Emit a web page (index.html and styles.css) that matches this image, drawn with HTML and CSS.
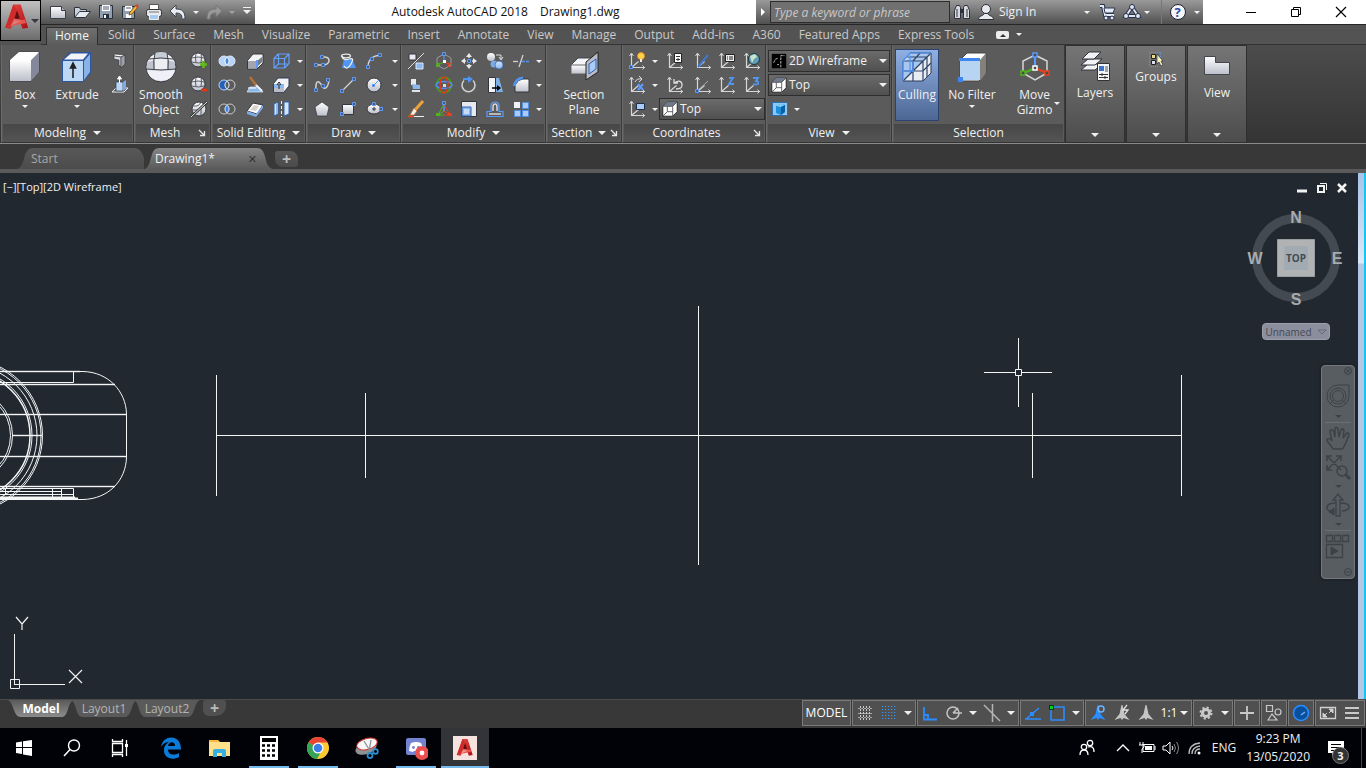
FILE: index.html
```html
<!DOCTYPE html>
<html lang="en">
<head>
<meta charset="utf-8">
<title>Autodesk AutoCAD 2018 - Drawing1.dwg</title>
<link rel="stylesheet" href="styles.css">
</head>
<body>
<svg class="sprite" aria-hidden="true">
<defs>
<linearGradient id="gw" x1="0" y1="0" x2="0" y2="1"><stop offset="0" stop-color="#fff"/><stop offset="1" stop-color="#bcbfca"/></linearGradient>
<linearGradient id="gb" x1="0" y1="0" x2="0" y2="1"><stop offset="0" stop-color="#d3e5fa"/><stop offset="1" stop-color="#8db8ee"/></linearGradient>
<linearGradient id="gr" x1="0" y1="0" x2="1" y2="1"><stop offset="0" stop-color="#f0504a"/><stop offset="1" stop-color="#a80f14"/></linearGradient>
<linearGradient id="gt" x1="0" y1="0" x2="0" y2="1"><stop offset="0" stop-color="#585858"/><stop offset="1" stop-color="#4c4c4c"/></linearGradient>
<linearGradient id="gta" x1="0" y1="0" x2="0" y2="1"><stop offset="0" stop-color="#858585"/><stop offset="1" stop-color="#5a5a5a"/></linearGradient>
<linearGradient id="gma" x1="0" y1="0" x2="0" y2="1"><stop offset="0" stop-color="#5a5a5a"/><stop offset="1" stop-color="#8c8c8c"/></linearGradient>
<symbol id="i-acad" viewBox="0 0 28 30"><path d="M10 1h8l8 25-6 1-3-8-6 0-4 8-6-1z" fill="url(#gr)"/><path d="M14 7l3 9-6 1z" fill="#5e1010"/><path d="M2 26l20-9 2 4-15 3z" fill="#e8544e"/><path d="M10 1l4 6-5 14-7 5z" fill="#cf2b2b"/><path d="M11 16l-4 8 13-6z" fill="#f08078" opacity=".7"/></symbol>
<symbol id="i-new" viewBox="0 0 20 20"><path d="M2.500 4.500h11l4 4v8h-15z" fill="url(#gw)" stroke="#3a3d44"/><path d="M13.500 4.500v4h4" fill="#aab" stroke="#3a3d44"/></symbol>
<symbol id="i-open" viewBox="0 0 20 20"><path d="M2.500 15.500v-10h5l1 2h6v3" fill="#c9d0da" stroke="#2c3440"/><path d="M2.500 15.500l5-6h11l-5 6z" fill="#e6eaf0" stroke="#2c3440"/></symbol>
<symbol id="i-save" viewBox="0 0 20 20"><path d="M3.500 3.500h13v13h-12l-1-1z" fill="#93a0b3" stroke="#28303c"/><path d="M6 3h8v6H6z" fill="#fff"/><path d="M7 5h6M7 7h6" stroke="#556"/><path d="M7 12h6v4H7z" fill="#28303c"/><path d="M8 13h2v3H8z" fill="#fff"/></symbol>
<symbol id="i-saveas" viewBox="0 0 20 20"><path d="M2.500 4.500h12v12h-11l-1-1z" fill="#93a0b3" stroke="#28303c"/><path d="M5 4h7v5H5z" fill="#fff"/><path d="M6 6h5" stroke="#556"/><path d="M6 12h5v4H6z" fill="#fff"/><path d="M16 3l2 2-6 7-3 1 1-3z" fill="#f6b73c" stroke="#5a3a10" stroke-width=".7"/><path d="M15 4l2-2 2 2-2 2z" fill="#d24a32"/></symbol>
<symbol id="i-print" viewBox="0 0 20 20"><path d="M5.500 2.500h9v5h-9z" fill="#fff" stroke="#555"/><rect x="2.500" y="7.500" width="15" height="7" rx="2" fill="#e8e8ec" stroke="#333"/><path d="M5.500 12.500h9v5h-9z" fill="#a8cbf2" stroke="#eee"/><path d="M5 10h10" stroke="#777"/></symbol>
<symbol id="i-undo" viewBox="0 0 20 20"><path d="M2 9l6-6v4c6 0 9 2 9 10h-3c0-5-2-6-6-6v4z" fill="#e9edf2" stroke="#3d4653"/></symbol>
<symbol id="i-redo" viewBox="0 0 20 20"><path d="M18 9l-6-6v4c-6 0-9 2-9 10h3c0-5 2-6 6-6v4z" fill="#999" stroke="#777"/></symbol>
<symbol id="i-bino" viewBox="0 0 20 20"><path d="M2.500 8.500l2-5h3l1 2v11h-6zM11.500 5.500l1-2h3l2 5v8h-6z" fill="#d8dce2" stroke="#2c3038"/><path d="M8 7h4v4H8z" fill="#2c3038"/><path d="M5 7v8M15 7v8" stroke="#2c3038"/></symbol>
<symbol id="i-user" viewBox="0 0 20 20"><circle cx="10" cy="7" r="4.500" fill="#e8eaf0" stroke="#2a2e36"/><path d="M2.500 17.500c0-4 4-3 6-6h3c2 3 6 2 6 6z" fill="#e8eaf0" stroke="#2a2e36"/></symbol>
<symbol id="i-cart" viewBox="0 0 20 20"><path d="M2 4h3l2 9h9" fill="none" stroke="#26304a" stroke-width="4"/><path d="M2 4h3l2 9h9" fill="none" stroke="#e6ecf6" stroke-width="2"/><path d="M6 6h11l-2 5H7z" fill="#e6ecf6" stroke="#2b3750"/><circle cx="8" cy="16" r="2" fill="#e6ecf6" stroke="#26304a"/><circle cx="14" cy="16" r="2" fill="#e6ecf6" stroke="#26304a"/></symbol>
<symbol id="i-tri" viewBox="0 0 20 20"><path d="M10 5L4 14h12z" fill="none" stroke="#26304a" stroke-width="4"/><path d="M10 5L4 14h12z" fill="none" stroke="#dfe6f2" stroke-width="2"/><circle cx="10" cy="5" r="2.500" fill="#dfe6f2" stroke="#26304a"/><circle cx="4" cy="14" r="2.500" fill="#dfe6f2" stroke="#26304a"/><circle cx="16" cy="14" r="2.500" fill="#dfe6f2" stroke="#26304a"/></symbol>
<symbol id="i-box" viewBox="0 0 34 34"><path d="M2 10L11 2h20v20l-8 9H2z" fill="#eceef2" stroke="#3c3e44"/><path d="M23 10l8-8v20l-8 9z" fill="#84889a"/><path d="M2 10h21v21H2z" fill="url(#gw)"/><path d="M2 10L11 2h20l-8 8z" fill="#fff"/></symbol>
<symbol id="i-extrude" viewBox="0 0 34 34"><path d="M2 10L10 2h21v21l-8 9H2z" fill="#2c56a0"/><path d="M3 11h20v20H3z" fill="#bcd8f6"/><path d="M24 11l6-7v18l-6 8z" fill="#8ab2e6"/><path d="M4 9.500L11 3.500h17l-5 6z" fill="#f2f4f8"/><path d="M13 28V15M10.500 18l2.500-5 2.500 5z" stroke="#222" stroke-width="1.600" fill="#222"/></symbol>
<symbol id="i-sphere" viewBox="0 0 34 34"><circle cx="17" cy="17" r="15" fill="url(#gw)" stroke="#393b42"/><path d="M3 12q14-4 28 0v7H2.500z" fill="#bfc3ce"/><path d="M11 3q6-2 12 0l1 6q-7-1-14 0z" fill="#c8ccd6"/><path d="M5 9q12-2 24 0M2 19q15 2 30 0M11 3q-2 8-1 16M23 3q2 8 1 16" fill="none" stroke="#3f424a"/><path d="M11 10h12v9H11z" fill="#eceef2"/><path d="M3 20q14 2 28 0-3 11-14 11T3 20z" fill="#f0f1f8"/></symbol>
<symbol id="i-secpl" viewBox="0 0 34 34"><path d="M4 15l7-7h13v16H4z" fill="#f4f5f8" stroke="#44464c"/><path d="M4 15h17v9H4z" fill="url(#gw)" stroke="#666"/><path d="M19 12L31 2v20L19 30z" fill="#b9bdc8" stroke="#222"/><path d="M22 14l7-5v10l-7 5z" fill="#a9cbf6" stroke="#2e62b4"/></symbol>
<symbol id="i-cull" viewBox="0 0 34 34"><path d="M3 11L10 3h21v20l-8 8H3z" fill="#e9ecf2" stroke="#2c3b58"/><path d="M4 12L12 4h19L3 31z" fill="#a9c6ee"/><g fill="none" stroke="#2f4468" stroke-width="1.200"><path d="M3 11h20v20M23 11l8-8M13 11v20M3 21h20l8-8M7 7h20v20M13 11l7-8M3 31L31 3"/></g><path d="M3 31V11l7-8h21M3 21h11M13 11v11M10 3v20" stroke="#4e96ff" fill="none" stroke-width="1.200"/></symbol>
<symbol id="i-nofil" viewBox="0 0 34 34"><path d="M5 10l7-7h19v20l-7 8H5z" fill="#fff" stroke="#444"/><path d="M25 10l6-7v20l-6 8z" fill="#85807c"/><path d="M5 10h20v20H5z" fill="#b7d4f2"/><path d="M4 8h21v3H4z" fill="#3f86ee"/><path d="M3 27h5v5H3z" fill="#3f86ee"/></symbol>
<symbol id="i-gizmo" viewBox="0 0 34 34"><path d="M17 5l12 6v12l-12 7-12-7V11z" fill="none" stroke="#d6d6d6" stroke-width="1.500"/><path d="M17 6v11" stroke="#5b9bff" stroke-width="2"/><path d="M17 18L6 23" stroke="#4fb51b" stroke-width="2"/><path d="M17 18l12 5" stroke="#e8401c" stroke-width="2"/><g fill="#4a4a4a" stroke-width="1.500"><path d="M15 3h4v4h-4z" stroke="#5b9bff"/><path d="M3 21h4v4H3z" stroke="#4fb51b"/><path d="M27 21h4v4h-4z" stroke="#e8401c"/><path d="M15 16h4v4h-4z" stroke="#fff"/></g></symbol>
<symbol id="i-layers" viewBox="0 0 34 34"><g fill="#f1f2f5" stroke="#303238"><path d="M3 21l7-6h14l-7 6z"/><path d="M3 16l7-6h14l-7 6z"/><path d="M4 10l7-7h12l-7 7z"/></g><path d="M19.500 14.500h12v17h-12z" fill="#f4f4f6" stroke="#303238"/><path d="M21 17h5v5h-5z" fill="#3d74c8"/><path d="M27 17h3v6h-3z" fill="#9aa"/><path d="M21 25.500h9M21 28.500h9M24 24v3M27 27v3" stroke="#333"/></symbol>
<symbol id="i-groups" viewBox="0 0 20 20"><path d="M3 3.500h11M3.500 3v14M3 17.500h9M14.500 3v8" stroke="#4f9af8" stroke-dasharray="1 1" fill="none"/><path d="M5.500 5.500h4v4h-4z" fill="#e8dc90" stroke="#222"/><path d="M5.500 11.500h4v4h-4z" fill="#dde" stroke="#222"/><path d="M11 5l6 7h-2l2 4-2 1-2-4-2 2z" fill="#f7f5c4" stroke="#333" stroke-width=".7"/></symbol>
<symbol id="i-vw" viewBox="0 0 34 34"><path d="M4.500 7.500h11v6h14v12h-25z" fill="url(#gw)" stroke="#44464c"/></symbol>
<symbol id="i-polysolid" viewBox="0 0 20 20"><path d="M4 3l11 1-4 2-7-1z" fill="#fff" stroke="#333" stroke-width=".6"/><path d="M4 5l7 1v10l-2-2V9L4 8z" fill="#d5d9e2" stroke="#333" stroke-width=".6"/><path d="M11 6l4-2v9l-4 4z" fill="#9da1ad" stroke="#333" stroke-width=".6"/></symbol>
<symbol id="i-presspull" viewBox="0 0 20 20"><path d="M2 17l4-4h12l-4 4z" fill="none" stroke="#eee"/><path d="M6 7h7v9H6z" fill="#bcd8f6" stroke="#2c3b58" stroke-width=".7"/><path d="M13 7l3-2v9l-3 2z" fill="#7daae6"/><path d="M9.500 8V2M7.500 4l2-3 2 3z" stroke="#fff" fill="#fff"/></symbol>
<symbol id="i-ball" viewBox="0 0 20 20"><circle cx="9" cy="9" r="7" fill="url(#gw)" stroke="#33363d"/><path d="M2.500 7q7-2 13 0M2.500 11q7 2 13 0M7 2.500q-1 4 0 9M12 2.500q1 4 0 9" fill="none" stroke="#5a5d66"/></symbol>
<symbol id="i-ballp" viewBox="0 0 20 20"><use href="#i-ball" width="20" height="20"/><path d="M14.500 10v7M11 13.500h7" stroke="#63b81e" stroke-width="2.600"/></symbol>
<symbol id="i-ballm" viewBox="0 0 20 20"><use href="#i-ball" width="20" height="20"/><path d="M12 15h6" stroke="#e33714" stroke-width="2.600"/></symbol>
<symbol id="i-balls" viewBox="0 0 20 20"><circle cx="10" cy="10" r="7" fill="url(#gw)" stroke="#33363d"/><path d="M4 7q6 1 8-4M3 11h6M12 8v8" fill="none" stroke="#5a5d66"/><path d="M2 18L18 3" stroke="#333" stroke-width="2.400"/><path d="M2 18L18 3" stroke="#eee"/></symbol>
<symbol id="i-union" viewBox="0 0 20 20"><circle cx="7" cy="10" r="5" fill="#b9d4f6" stroke="#dbe9fb"/><circle cx="13" cy="10" r="5" fill="#b9d4f6" stroke="#dbe9fb"/><path d="M10 6q4 4 0 8-4-4 0-8z" fill="#4c86d8" stroke="#fff" stroke-width=".8"/></symbol>
<symbol id="i-subtract" viewBox="0 0 20 20"><circle cx="7" cy="10" r="5" fill="#2360b8" stroke="#b9d4f6"/><circle cx="13" cy="10" r="5" fill="none" stroke="#d0d0d0"/><path d="M10 6q4 4 0 8-4-4 0-8z" fill="#5b5b5b" stroke="#dce9fb" stroke-width=".8"/></symbol>
<symbol id="i-intersect" viewBox="0 0 20 20"><circle cx="7" cy="10" r="5" fill="none" stroke="#c8c8c8"/><circle cx="13" cy="10" r="5" fill="none" stroke="#c8c8c8"/><path d="M10 6q4 4 0 8-4-4 0-8z" fill="#3d86e8" stroke="#b9d4f6"/></symbol>
<symbol id="i-cube" viewBox="0 0 20 20"><path d="M2.500 9.500L8 3h10v9l-6 6H2.500z" fill="#f4f4f6" stroke="#33363d"/><path d="M3 10h8v7H3z" fill="#a2a5ae"/><path d="M12 10l5-4v5l-5 5z" fill="#777b86"/><path d="M11 9h2v8h-2z" fill="#5b9bff"/></symbol>
<symbol id="i-slice" viewBox="0 0 20 20"><path d="M2 17l3-5h9l4 5z" fill="#8db8ee" stroke="#dbe9fb" stroke-width=".7"/><path d="M10 9l7 7" stroke="#eee" stroke-width="2"/><path d="M5 2l6 8" stroke="#b4713a" stroke-width="2.500"/><path d="M3 13h8" stroke="#fff"/></symbol>
<symbol id="i-thicken" viewBox="0 0 20 20"><path d="M2 12l6-8 10 2-6 9z" fill="#fff" stroke="#33363d"/><path d="M2 12l9 3v3l-9-3zM11 15l7-9v3l-7 9z" fill="#7daae6"/><path d="M5 11l4-5 5 1-3 5z" fill="#d8d4cc"/></symbol>
<symbol id="i-wirecube" viewBox="0 0 20 20"><path d="M3 7.500h10.500V17H3zM3 7.500l4-4.500h11v9.500L13.500 17M13.500 7.500L18 3M7.500 3v10H18M7.500 13L3 17" fill="none" stroke="#62a0fa" stroke-width="1.200"/></symbol>
<symbol id="i-exface" viewBox="0 0 20 20"><path d="M2.500 8.500L7 3h11v8l-5 6H2.500z" fill="#f2f3f6" stroke="#2c3b58"/><path d="M3 9h10v4H3z" fill="#8db8ee"/><path d="M3 13h10v4H3z" fill="#b9bdc8"/><path d="M8 14V9M6 10l2-3 2 3" stroke="#222" fill="none"/></symbol>
<symbol id="i-separate" viewBox="0 0 20 20"><path d="M3 5l4-2v12l-4 2zM13 3h5v12l-5 2z" fill="#d3e5fa" stroke="#2f62b0"/><path d="M5 5h2v10H5z" fill="#8db8ee"/><path d="M10.500 2v16" stroke="#eee" stroke-dasharray="3 2"/></symbol>
<symbol id="i-pline" viewBox="0 0 20 20"><path d="M4 14h8q5-1 5-4.500T12 6h-2" fill="none" stroke="#d4d4d4" stroke-width="1.500"/><path class="n" d="M2.500 12.500h3v3h-3zM9.500 12.500h3v3h-3zM8.500 4.500h3v3h-3z"/></symbol>
<symbol id="i-spline" viewBox="0 0 20 20"><path d="M4 16C3 2 8 7 10 11s6 3 7-6" fill="none" stroke="#d4d4d4" stroke-width="1.500"/><path class="n" d="M2.500 13.500h3v3h-3zM9.500 9.500h3v3h-3zM14.500 3.500h3v3h-3z"/></symbol>
<symbol id="i-polygon" viewBox="0 0 20 20"><path d="M10 3l7 5-2 9H5L3 8z" fill="url(#gw)" stroke="#33363d" stroke-width=".7"/></symbol>
<symbol id="i-helix" viewBox="0 0 20 20"><path d="M6 8h8l4 9H4z" fill="#4f96f4"/><ellipse cx="8" cy="5" rx="4.500" ry="1.800" class="w"/><path class="w" d="M4 5q1 5 7 3t2 5-7 2"/></symbol>
<symbol id="i-line" viewBox="0 0 20 20"><path d="M4 16L16 4" stroke="#d4d4d4" stroke-width="1.300"/><path class="n" d="M2.500 14.500h3v3h-3zM14.500 2.500h3v3h-3z"/></symbol>
<symbol id="i-rect" viewBox="0 0 20 20"><path d="M4.500 5.500h11v10h-11z" fill="url(#gw)" stroke="#33363d"/><path class="n" d="M2.500 13.500h3v3h-3zM14.500 3.500h3v3h-3z"/></symbol>
<symbol id="i-arc" viewBox="0 0 20 20"><path d="M4 16Q4 5 17 4" fill="none" stroke="#d4d4d4" stroke-width="1.300"/><path class="n" d="M2.500 14.500h3v3h-3zM6.500 6.500h3v3h-3zM14.500 2.500h3v3h-3z"/></symbol>
<symbol id="i-circle" viewBox="0 0 20 20"><circle cx="10" cy="10" r="7" fill="url(#gw)" stroke="#33363d"/><path d="M10 10l5-5" stroke="#4f96f4"/><path class="n" d="M8.500 9.500h2v2h-2z"/></symbol>
<symbol id="i-ellipse" viewBox="0 0 20 20"><ellipse cx="10" cy="10" rx="7" ry="5" fill="url(#gw)" stroke="#33363d"/><path d="M10 8v4M8 10h4" stroke="#333"/><path class="n" d="M8.500 3.500h3v3h-3zM15.500 8.500h3v3h-3z"/></symbol>
<symbol id="i-m1" viewBox="0 0 20 20"><path d="M3 3h7v6H3z" fill="#e8e9ee" stroke="#33363d"/><path d="M2 18L18 2" stroke="#ddd"/><path d="M10 12h7v6h-7z" fill="#8db8ee" stroke="#dbe9fb"/></symbol>
<symbol id="i-m2" viewBox="0 0 20 20"><path d="M5 4h5v6H5z" fill="#e8e9ee"/><path d="M6 9l8 1v4H7z" fill="#8db8ee"/><path d="M6 15h8v2H6z" fill="#dfe3ea"/></symbol>
<symbol id="i-m3" viewBox="0 0 20 20"><path d="M2 17.500h6" stroke="#e84a20" stroke-width="1.500"/><path d="M8 17.500h10" stroke="#eee"/><path d="M17 2l-8 9" stroke="#eda33a" stroke-width="3"/><path d="M8 9l3 3-3 4H4z" fill="#f4f4f4" stroke="#d8722a" stroke-width=".8"/></symbol>
<symbol id="i-giz" viewBox="0 0 20 20"><path d="M10 3l7 4v7l-7 4-7-4V7z" fill="none" stroke="#999"/><path d="M10 3v7" stroke="#5b9bff"/><path d="M10 11l-6 3" stroke="#4fb51b"/><path d="M10 11l6 3" stroke="#e8401c"/><path class="n" d="M8.500 1.500h3v3h-3z"/><path d="M2.500 12.500h3v3h-3z" fill="none" stroke="#4fb51b"/><path d="M14.500 12.500h3v3h-3z" fill="none" stroke="#e8401c"/><path d="M9 9h3v3H9z" fill="#fff"/></symbol>
<symbol id="i-rot3" viewBox="0 0 20 20"><circle cx="10" cy="10" r="7.500" fill="none" stroke="#3f9e1c" stroke-width="1.800"/><ellipse cx="10" cy="10" rx="8" ry="3.500" fill="none" stroke="#4f8ef0" stroke-width="1.500"/><ellipse cx="10" cy="10" rx="4" ry="8" fill="none" stroke="#e0371a" stroke-width="1.500"/><path d="M9 9h3v3H9z" fill="#ddd"/></symbol>
<symbol id="i-sc3" viewBox="0 0 20 20"><path d="M10 4v8" stroke="#5b9bff" stroke-width="1.500"/><path d="M10 5L4 16h6M10 12l-6 4" stroke="#4fb51b" fill="none"/><path d="M10 5l6 11h-6M10 12l6 4" stroke="#e8401c" fill="none"/><path class="n" d="M8.500 2.500h3v3h-3z"/><path d="M2 14h4v3H2z" fill="#4fb51b"/><path d="M14 14h4v3h-4z" fill="#e8401c"/></symbol>
<symbol id="i-move" viewBox="0 0 20 20"><path d="M10 3v14M3 10h14" stroke="#e8e8e8" stroke-width="1.500" stroke-dasharray="4 6"/><path d="M10 2l3 4H7zM10 18l3-4H7zM2 10l4-3v6zM18 10l-4-3v6z" fill="#e8e8e8"/><path class="n" d="M8.500 8.500h3v3h-3z"/></symbol>
<symbol id="i-rotate" viewBox="0 0 20 20"><path d="M5 5.500a6.500 6.500 0 1 0 9 0" fill="none" stroke="#d0d0d0" stroke-width="1.600"/><path d="M4 4h7" stroke="#4f96f4" stroke-width="2"/><path d="M9 1l5 3-5 4z" fill="#4f96f4"/></symbol>
<symbol id="i-scale" viewBox="0 0 20 20"><path d="M2.500 2.500h15v15h-15z" fill="#e6e9f0" stroke="#33363d"/><path d="M3 8h9v9H3z" fill="#8db8ee" stroke="#2f62b0"/><path d="M5 10h5v5H5z" fill="#c4dcf8"/></symbol>
<symbol id="i-copy" viewBox="0 0 20 20"><circle cx="6" cy="6" r="4" fill="url(#gw)"/><circle cx="9" cy="13" r="3.500" fill="#7daae6"/><circle cx="14" cy="14" r="4" fill="url(#gb)" stroke="#2f62b0" stroke-width=".7"/><path d="M11 4h5v4M14 6l2 3 2-3" fill="none" stroke="#ddd"/></symbol>
<symbol id="i-mirror" viewBox="0 0 20 20"><path d="M3.500 2.500h7v15h-7z" fill="#f2f3f6" stroke="#33363d"/><path d="M11 3h3l4 14h-7z" fill="#7fb0e8"/><path d="M7 13h6" stroke="#000" stroke-width="1.500"/><path d="M12 10l4 3-4 3z"/></symbol>
<symbol id="i-offset" viewBox="0 0 20 20"><path d="M2 17.500h16v-5h-4V7q0-4-4-4T6 7v5.500H2z" fill="none" stroke="#5b9bff" stroke-width="1.200"/><path d="M4 15h12M8 12V8q0-3 2-3t2 3v4" fill="none" stroke="#d8d8d8" stroke-width="1.500"/></symbol>
<symbol id="i-trim" viewBox="0 0 20 20"><path d="M2 10.500h5" stroke="#d0d0d0" stroke-width="1.300"/><path d="M8 16l4-12" stroke="#d0d0d0" stroke-width="1.300"/><path d="M11 10.500h7" stroke="#4f96f4" stroke-dasharray="3 1" stroke-width="1.500"/></symbol>
<symbol id="i-fillet" viewBox="0 0 20 20"><path d="M4 17V10q3-6 8-6h6v13z" fill="url(#gw)" stroke="#33363d"/><path d="M3 11Q5 3 12 3" fill="none" stroke="#4f96f4" stroke-width="2.500"/></symbol>
<symbol id="i-array" viewBox="0 0 20 20"><path d="M3 3h6v6H3z" fill="#f2f3f6"/><path d="M11.500 3.500h6v6h-6zM3.500 11.500h6v6h-6zM11.500 11.500h6v6h-6z" fill="#a9cbf6" stroke="#4f8ee4"/></symbol>
<symbol id="i-ax" viewBox="0 0 20 20"><path d="M4.500 3v13.500H18M4.500 16.500l7-6" fill="none" stroke="#d6d6d6" stroke-width="1.200"/><path d="M2.500 5l2-3 2 3M15.500 14.500l2 2-2 2" fill="none" stroke="#d6d6d6"/></symbol>
<symbol id="i-c1" viewBox="0 0 20 20"><use href="#i-ax" width="20" height="20"/><path class="n" d="M2.500 14.500h3v3h-3z"/><circle cx="14" cy="5" r="3.500" fill="#ffd54a" stroke="#e8892a"/><path d="M13 8h2v3h-2z" fill="#eee"/></symbol>
<symbol id="i-c2" viewBox="0 0 20 20"><use href="#i-ax" width="20" height="20"/><path d="M9.500 2.500h7v9h-7z" fill="#fff" stroke="#222"/><path d="M11 5.500h4M11 8.500h4M13 7v3" stroke="#333"/></symbol>
<symbol id="i-c3" viewBox="0 0 20 20"><use href="#i-ax" width="20" height="20"/><path d="M5 16L15 4" stroke="#3f78d0" stroke-width="2"/></symbol>
<symbol id="i-c4" viewBox="0 0 20 20"><use href="#i-ax" width="20" height="20"/><path d="M8.500 3.500h9v7h-9z" fill="#eee" stroke="#222"/><path d="M10 6h1M12 6h4M10 8h1M12 8h4" stroke="#222"/></symbol>
<symbol id="i-c5" viewBox="0 0 20 20"><use href="#i-ax" width="20" height="20"/><circle cx="12" cy="8" r="5.500" fill="#5f9fb8" stroke="#25343c"/><path d="M8 5l5-2 2 3-3 2-2 4z" fill="#c9e6c8"/></symbol>
<symbol id="i-c6" viewBox="0 0 20 20"><use href="#i-ax" width="20" height="20"/><path d="M8 7q2-4 7-3M12 1l3 3-3 3" fill="none" stroke="#ddd"/><path d="M11 9l5 6M16 9l-5 6" stroke="#5b9bff" stroke-width="2"/></symbol>
<symbol id="i-c7" viewBox="0 0 20 20"><use href="#i-ax" width="20" height="20"/><path d="M9 8q7-4 8 1t-6 5M9 4v4h4" fill="none" stroke="#ddd" stroke-width="1.300"/></symbol>
<symbol id="i-c8" viewBox="0 0 20 20"><use href="#i-ax" width="20" height="20"/><path d="M4 16L15 6" stroke="#aaa"/><path class="n" d="M2.500 14.500h3v3h-3z"/></symbol>
<symbol id="i-c9" viewBox="0 0 20 20"><use href="#i-ax" width="20" height="20"/><path d="M12 3h4l-4 6h5" fill="none" stroke="#4f96f4" stroke-width="1.800"/></symbol>
<symbol id="i-c10" viewBox="0 0 20 20"><use href="#i-ax" width="20" height="20"/><path d="M11 3h5l-2 3q3 0 2 3-2 1-5 0" fill="none" stroke="#4f96f4" stroke-width="1.800"/></symbol>
<symbol id="i-c11" viewBox="0 0 20 20"><use href="#i-ax" width="20" height="20"/><path d="M9.500 4.500h8v6h-8z" fill="#a9cbf6" stroke="#1f3048"/></symbol>
<symbol id="i-vwcube" viewBox="0 0 20 20"><path d="M2 7l5-5h11v11l-5 5H2z" fill="#fff" stroke="#222"/><path d="M2 7l5-5h11l-5 5z" fill="#707a8c"/><path d="M2 7h11v11M13 7l5-5M7 7v6h6M7 13l-5 5" fill="none" stroke="#555"/></symbol>
<symbol id="i-wf" viewBox="0 0 20 20"><path d="M2 2h16v16H2z" fill="#000"/><path d="M12 17V4h4M4 12l2-4 3-1M8 14h2" stroke="#ccc" fill="none" stroke-dasharray="3 1"/></symbol>
<symbol id="i-vport" viewBox="0 0 20 20"><path d="M2 3h16v14H2z" fill="#2f70b4"/><path d="M3 4h14v12H3z" fill="#8fc7f0"/><path d="M6 7l4-2 5 1v7l-4 3-5-2z" fill="#1c8fdc"/><path d="M6 7l4-2 5 1-4 2z" fill="#7fd0fa"/><path d="M11 8l4-2v7l-4 3z" fill="#0d5ea4"/></symbol>
<symbol id="i-launch" viewBox="0 0 8 8"><path d="M1 1l5 5M6.500 2v4.500H2" fill="none" stroke="#e8e8e8" stroke-width="1.300"/></symbol>
<symbol id="i-grid" viewBox="0 0 20 20"><path d="M5.500 3v14M8.500 3v14M11.500 3v14M14.500 3v14" stroke="#c8c8c8" stroke-dasharray="2 1"/><path d="M3 5.500h14M3 10.500h14M3 14.500h14" stroke="#a8a8a8" stroke-dasharray="2 1"/></symbol>
<symbol id="i-snap" viewBox="0 0 20 20"><path d="M3 3.500h14M3 6.500h14M3 9.500h14M3 12.500h14M3 15.500h14" stroke="#3a96ff" stroke-width="1.200" stroke-dasharray="1.200 1.800"/></symbol>
<symbol id="i-ortho" viewBox="0 0 20 20"><path d="M4 4v12.500h13M4 12h4v4" fill="none" stroke="#2a8cff" stroke-width="1.800"/></symbol>
<symbol id="i-polar" viewBox="0 0 20 20"><circle cx="9" cy="10" r="6" fill="none" stroke="#c4c4c4" stroke-width="1.500"/><path d="M9 10l5-5M9 10h9" stroke="#c4c4c4" stroke-width="1.500"/></symbol>
<symbol id="i-iso" viewBox="0 0 20 20"><path d="M2 2l16 16M10.500 1v18" stroke="#b4b4b4" stroke-width="1.500"/></symbol>
<symbol id="i-otrack" viewBox="0 0 20 20"><path d="M2 16h16M3 16L16 5" stroke="#2a8cff" stroke-width="1.500"/><path d="M7 9h4v4H7z" fill="#2a8cff"/></symbol>
<symbol id="i-osnap" viewBox="0 0 20 20"><path d="M4 4h13v13H4z" fill="none" stroke="#2a8cff" stroke-width="1.600"/><path d="M2.500 2.500h4v4h-4z" fill="#00d020" stroke="#031"/></symbol>
<symbol id="i-ann" viewBox="0 0 20 20"><path d="M9.500 2h1l2 9 5 6-6-2-1.500 2-1.500-2-6 2 5-6z" fill="currentColor"/></symbol>
<symbol id="i-ann1" viewBox="0 0 20 20"><use href="#i-ann" width="20" height="20"/><circle cx="13" cy="6" r="3" fill="none" stroke="#6ab2ff" stroke-width="1.500"/></symbol>
<symbol id="i-ann2" viewBox="0 0 20 20"><use href="#i-ann" width="20" height="20"/><path d="M15 2l-4 5h5l-3 4" fill="none" stroke="#e0e0e0" stroke-width="1.300"/></symbol>
<symbol id="i-gear" viewBox="0 0 20 20"><circle cx="10" cy="10" r="3.500" fill="none" stroke="#c8c8c8" stroke-width="3"/><circle cx="10" cy="10" r="5.500" fill="none" stroke="#c8c8c8" stroke-width="2" stroke-dasharray="2.200 2.100"/></symbol>
<symbol id="i-plus" viewBox="0 0 20 20"><path d="M10 3v14M3 10h14" stroke="#c8c8c8" stroke-width="1.800"/></symbol>
<symbol id="i-shapes" viewBox="0 0 20 20"><path d="M2.500 2.500h6v6h-6zM4 17l4-6 5 6z" fill="none" stroke="#c8c8c8" stroke-width="1.200"/><circle cx="14" cy="9" r="3" fill="none" stroke="#c8c8c8" stroke-width="1.200"/></symbol>
<symbol id="i-perf" viewBox="0 0 20 20"><circle cx="10" cy="10" r="7.500" fill="#0a4f9c" stroke="#2a8cff" stroke-width="1.600"/><path d="M10 12l4-3" stroke="#6ab2ff" stroke-width="1.500"/></symbol>
<symbol id="i-full" viewBox="0 0 20 20"><path d="M2.500 4.500h15v11h-15z" fill="none" stroke="#d0d0d0" stroke-width="1.300"/><path d="M11 6h4v4zM5 10v4h4zM15 6l-4 4M5 14l4-4" fill="#d0d0d0" stroke="#d0d0d0"/></symbol>
<symbol id="i-menu" viewBox="0 0 20 20"><path d="M3 5h14M3 10h14M3 15h14" stroke="#c8c8c8" stroke-width="1.800"/></symbol>
</defs>
</svg>

<header class="top">
  <button class="app" aria-label="Application menu"><svg class="appicon"><use href="#i-acad"/></svg><i class="ar dark"></i></button>
  <div class="titlebar">
    <div class="qat">
      <button class="q" aria-label="New"><svg><use href="#i-new"/></svg></button>
      <button class="q" aria-label="Open"><svg><use href="#i-open"/></svg></button>
      <button class="q" aria-label="Save"><svg><use href="#i-save"/></svg></button>
      <button class="q" aria-label="Save As"><svg><use href="#i-saveas"/></svg></button>
      <button class="q" aria-label="Plot"><svg><use href="#i-print"/></svg></button>
      <button class="q" aria-label="Undo"><svg><use href="#i-undo"/></svg></button>
      <button class="drop" aria-label="Undo list"><i class="ar s"></i></button>
      <button class="q" aria-label="Redo"><svg><use href="#i-redo"/></svg></button>
      <button class="drop" aria-label="Redo list"><i class="ar s dim"></i></button>
      <button class="custom" aria-label="Customize toolbar"><i class="ar m"></i></button>
    </div>
    <h1 class="title"><span>Autodesk AutoCAD 2018</span><span>Drawing1.dwg</span></h1>
    <div class="info">
      <button class="expand" aria-label="Collapse search"><i></i></button>
      <input class="search" type="text" aria-label="Search" placeholder="Type a keyword or phrase">
      <button class="q" aria-label="Find"><svg><use href="#i-bino"/></svg></button>
      <button class="sign"><svg><use href="#i-user"/></svg><span>Sign In</span><i class="ar s"></i></button>
      <button class="q" aria-label="App Store"><svg><use href="#i-cart"/></svg></button>
      <button class="q" aria-label="Stay connected"><svg><use href="#i-tri"/></svg></button>
      <button class="drop conn" aria-label="Connection list"><i class="ar s"></i></button>
      <button class="help" aria-label="Help"><b>?</b></button>
      <button class="drop" aria-label="Help list"><i class="ar s"></i></button>
    </div>
    <div class="winctl">
      <button aria-label="Minimize"><svg viewBox="0 0 12 12"><path d="M1 6.500h10" stroke="#000"/></svg></button>
      <button aria-label="Restore"><svg viewBox="0 0 12 12"><path d="M1.500 3.500h7v7h-7zM3.500 3.500v-2h7v7h-2" fill="none" stroke="#000"/></svg></button>
      <button aria-label="Close"><svg viewBox="0 0 12 12"><path d="M1 1l10 10M11 1L1 11" stroke="#000" stroke-width="1.200"/></svg></button>
    </div>
  </div>
  <nav class="tabs">
    <a href="#" class="on">Home</a><a href="#">Solid</a><a href="#">Surface</a><a href="#">Mesh</a><a href="#">Visualize</a><a href="#">Parametric</a><a href="#">Insert</a><a href="#">Annotate</a><a href="#">View</a><a href="#">Manage</a><a href="#">Output</a><a href="#">Add-ins</a><a href="#">A360</a><a href="#">Featured Apps</a><a href="#">Express Tools</a>
    <button class="minrib" aria-label="Minimize ribbon"><i class="pill"></i><i class="ar s"></i></button>
  </nav>
</header>

<section class="ribbon" aria-label="Ribbon">
  <div class="panel">
    <div class="body modeling">
      <button class="big"><svg><use href="#i-box"/></svg><span>Box</span><i class="ar s"></i></button>
      <button class="big"><svg><use href="#i-extrude"/></svg><span>Extrude</span><i class="ar s"></i></button>
      <button class="ib" aria-label="Polysolid"><svg><use href="#i-polysolid"/></svg></button>
      <button class="ib" aria-label="Presspull"><svg><use href="#i-presspull"/></svg></button>
    </div>
    <h2>Modeling<i class="ar m"></i></h2>
  </div>
  <div class="panel">
    <div class="body mesh">
      <button class="big"><svg><use href="#i-sphere"/></svg><span>Smooth<br>Object</span></button>
      <button class="ib" aria-label="Smooth more"><svg><use href="#i-ballp"/></svg></button>
      <button class="ib" aria-label="Smooth less"><svg><use href="#i-ballm"/></svg></button>
      <button class="ib" aria-label="Refine mesh"><svg><use href="#i-balls"/></svg></button>
    </div>
    <h2 class="launcher"><span>Mesh</span><svg class="launch"><use href="#i-launch"/></svg></h2>
  </div>
  <div class="panel">
    <div class="body solid">
      <button class="ib" aria-label="Union"><svg><use href="#i-union"/></svg></button>
      <button class="ib" aria-label="Interfere"><svg><use href="#i-cube"/></svg></button>
      <button class="ib" aria-label="Extract edges"><svg><use href="#i-wirecube"/></svg></button>
      <button class="dd" aria-label="Edge tools"><i class="ar s"></i></button>
      <button class="ib" aria-label="Subtract"><svg><use href="#i-subtract"/></svg></button>
      <button class="ib" aria-label="Slice"><svg><use href="#i-slice"/></svg></button>
      <button class="ib" aria-label="Extrude faces"><svg><use href="#i-exface"/></svg></button>
      <button class="dd" aria-label="Face tools"><i class="ar s"></i></button>
      <button class="ib" aria-label="Intersect"><svg><use href="#i-intersect"/></svg></button>
      <button class="ib" aria-label="Thicken"><svg><use href="#i-thicken"/></svg></button>
      <button class="ib" aria-label="Separate"><svg><use href="#i-separate"/></svg></button>
      <button class="dd" aria-label="Body tools"><i class="ar s"></i></button>
    </div>
    <h2>Solid Editing<i class="ar m"></i></h2>
  </div>
  <div class="panel">
    <div class="body draw">
      <button class="ib" aria-label="Polyline"><svg><use href="#i-pline"/></svg></button>
      <button class="ib" aria-label="Helix"><svg><use href="#i-helix"/></svg></button>
      <button class="ib" aria-label="Arc"><svg><use href="#i-arc"/></svg></button>
      <button class="dd" aria-label="Arc list"><i class="ar s"></i></button>
      <button class="ib" aria-label="Spline"><svg><use href="#i-spline"/></svg></button>
      <button class="ib" aria-label="Line"><svg><use href="#i-line"/></svg></button>
      <button class="ib" aria-label="Circle"><svg><use href="#i-circle"/></svg></button>
      <button class="dd" aria-label="Circle list"><i class="ar s"></i></button>
      <button class="ib" aria-label="Polygon"><svg><use href="#i-polygon"/></svg></button>
      <button class="ib" aria-label="Rectangle"><svg><use href="#i-rect"/></svg></button>
      <button class="ib" aria-label="Ellipse"><svg><use href="#i-ellipse"/></svg></button>
      <button class="dd" aria-label="Ellipse list"><i class="ar s"></i></button>
    </div>
    <h2>Draw<i class="ar m"></i></h2>
  </div>
  <div class="panel">
    <div class="body modify">
      <button class="ib" aria-label="3D mirror"><svg><use href="#i-m1"/></svg></button>
      <button class="ib" aria-label="3D move"><svg><use href="#i-giz"/></svg></button>
      <button class="ib" aria-label="Move"><svg><use href="#i-move"/></svg></button>
      <button class="ib" aria-label="Copy"><svg><use href="#i-copy"/></svg></button>
      <button class="ib" aria-label="Trim"><svg><use href="#i-trim"/></svg></button>
      <button class="dd" aria-label="Trim list"><i class="ar s"></i></button>
      <button class="ib" aria-label="3D align"><svg><use href="#i-m2"/></svg></button>
      <button class="ib" aria-label="3D rotate"><svg><use href="#i-rot3"/></svg></button>
      <button class="ib" aria-label="Rotate"><svg><use href="#i-rotate"/></svg></button>
      <button class="ib" aria-label="Stretch"><svg><use href="#i-mirror"/></svg></button>
      <button class="ib" aria-label="Fillet"><svg><use href="#i-fillet"/></svg></button>
      <button class="dd" aria-label="Fillet list"><i class="ar s"></i></button>
      <button class="ib" aria-label="Erase"><svg><use href="#i-m3"/></svg></button>
      <button class="ib" aria-label="3D scale"><svg><use href="#i-sc3"/></svg></button>
      <button class="ib" aria-label="Scale"><svg><use href="#i-scale"/></svg></button>
      <button class="ib" aria-label="Offset"><svg><use href="#i-offset"/></svg></button>
      <button class="ib" aria-label="Array"><svg><use href="#i-array"/></svg></button>
      <button class="dd" aria-label="Array list"><i class="ar s"></i></button>
    </div>
    <h2>Modify<i class="ar m"></i></h2>
  </div>
  <div class="panel">
    <div class="body section">
      <button class="big"><svg><use href="#i-secpl"/></svg><span>Section<br>Plane</span></button>
    </div>
    <h2 class="launcher tight"><span>Section</span><i class="ar m"></i><svg class="launch"><use href="#i-launch"/></svg></h2>
  </div>
  <div class="panel">
    <div class="body coords">
      <button class="ib" aria-label="UCS origin"><svg><use href="#i-c1"/></svg></button>
      <button class="dd" aria-label="Origin list"><i class="ar s"></i></button>
      <button class="ib" aria-label="Named UCS"><svg><use href="#i-c2"/></svg></button>
      <button class="ib" aria-label="UCS"><svg><use href="#i-c3"/></svg></button>
      <button class="ib" aria-label="UCS settings"><svg><use href="#i-c4"/></svg></button>
      <button class="ib" aria-label="World"><svg><use href="#i-c5"/></svg></button>
      <button class="ib" aria-label="Rotate X"><svg><use href="#i-c6"/></svg></button>
      <button class="dd" aria-label="Rotate list"><i class="ar s"></i></button>
      <button class="ib" aria-label="Previous UCS"><svg><use href="#i-c7"/></svg></button>
      <button class="ib" aria-label="Origin"><svg><use href="#i-c8"/></svg></button>
      <button class="ib" aria-label="Z-axis vector"><svg><use href="#i-c9"/></svg></button>
      <button class="ib" aria-label="3-point"><svg><use href="#i-c10"/></svg></button>
      <button class="ib" aria-label="View UCS"><svg><use href="#i-c11"/></svg></button>
      <button class="dd" aria-label="View UCS list"><i class="ar s"></i></button>
      <div class="sel wide"><svg><use href="#i-vwcube"/></svg><select aria-label="UCS"><option>Top</option></select><i class="ar m"></i></div>
    </div>
    <h2 class="launcher"><span>Coordinates</span><svg class="launch"><use href="#i-launch"/></svg></h2>
  </div>
  <div class="panel">
    <div class="body view">
      <div class="sel"><svg><use href="#i-wf"/></svg><select aria-label="Visual style"><option>2D Wireframe</option></select><i class="ar m"></i></div>
      <div class="sel"><svg><use href="#i-vwcube"/></svg><select aria-label="Named view"><option>Top</option></select><i class="ar m"></i></div>
      <button class="vport" aria-label="Viewport configuration"><svg><use href="#i-vport"/></svg><i class="ar s"></i></button>
    </div>
    <h2>View<i class="ar m"></i></h2>
  </div>
  <div class="panel">
    <div class="body selection">
      <button class="big on"><svg><use href="#i-cull"/></svg><span>Culling</span></button>
      <button class="big"><svg><use href="#i-nofil"/></svg><span>No Filter</span><i class="ar s"></i></button>
      <button class="big gizmo"><svg><use href="#i-gizmo"/></svg><span>Move<br>Gizmo</span><i class="ar s"></i></button>
    </div>
    <h2>Selection</h2>
  </div>
  <button class="folded"><svg><use href="#i-layers"/></svg><span>Layers</span><i class="ar m"></i></button>
  <button class="folded"><svg class="sm"><use href="#i-groups"/></svg><span>Groups</span><i class="ar m"></i></button>
  <button class="folded"><svg><use href="#i-vw"/></svg><span>View</span><i class="ar m"></i></button>
</section>

<nav class="files" aria-label="Open drawings">
  <button class="ftab"><svg viewBox="0 0 128 22" preserveAspectRatio="none"><path d="M0 22C9 20 5 1 16 1h102q6 0 9 10v11z" fill="url(#gt)"/></svg><span>Start</span></button>
  <button class="ftab on"><svg viewBox="0 0 128 22" preserveAspectRatio="none"><path d="M0 22C8 18 4 1 14 1h98c11 0 6 19 16 21z" fill="url(#gta)"/></svg><span>Drawing1*</span><b>✕</b></button>
  <button class="fplus" aria-label="New drawing">+</button>
</nav>

<main class="canvas">
  <div class="work">
    <svg class="drawing" aria-label="Drawing">
      <g fill="none" stroke="#f4f6f6">
        <path d="M216.500 202v121M365.500 220v85M698.500 133v259M1032.500 220v85M1181.500 202v121M216 262.500h966"/>
        <path d="M984 199.500h31M1022 199.500h30M1018.500 165v31M1018.500 203v31M1015.500 196.500h6v6h-6z"/>
        <path d="M0 198.500h83C108 199 126 218 126.500 241v43C126 308 108 326 83 326.500H0"/>
        <path d="M0 209.500h73.500v-11M0 211.500h115M0 241.500h126M12 262.500h30M0 283.500h126M0 313.500h115M0 315.500h73.500v9.500M0 321.500h73M5.500 315v7M52.500 315v9M61.500 315v9M0 318.500h61"/>
        <path d="M0 324.500h75M0 325.500h78" stroke-width="2"/>
        <circle cx="-34" cy="262.500" r="76.500"/><circle cx="-34" cy="262.500" r="75"/><circle cx="-34" cy="262.500" r="71"/><circle cx="-34" cy="262.500" r="66"/><circle cx="-34" cy="262.500" r="64" stroke-width="1.500"/><circle cx="-34" cy="262.500" r="46.500"/><circle cx="-34" cy="262.500" r="44.500"/>
      </g>
      <path d="M0 198.500h80M0 211.500h115M0 241.500h126M12 262.500h30M0 283.500h126M0 313.500h115" fill="none" stroke="#f4f6f6" stroke-width="2" opacity=".4"/>
    </svg>
    <p class="vplabel">[−][Top][2D Wireframe]</p>
    <div class="vpctl">
      <button aria-label="Minimize viewport"><svg viewBox="0 0 12 12"><path d="M1 9h10" stroke="#f2f2f2" stroke-width="3"/></svg></button>
      <button aria-label="Restore viewport"><svg viewBox="0 0 12 12"><path d="M2 4h6v6H2z" fill="none" stroke="#f2f2f2" stroke-width="2"/><path d="M4 1.500h6.500V8" fill="none" stroke="#f2f2f2"/></svg></button>
      <button aria-label="Close viewport"><svg viewBox="0 0 12 12"><path d="M2 2l8 8M10 2l-8 8" stroke="#f2f2f2" stroke-width="2.500"/></svg></button>
    </div>
    <div class="cube">
      <svg viewBox="0 0 98 98"><circle cx="49" cy="48" r="39.500" fill="none" stroke="#434a51" stroke-width="9"/>
        <path d="M30.500 29.500h37v37h-37z" fill="#b0b2b3" stroke="#999c9e"/><path d="M37 36h24v24H37z" fill="#a2abb1"/>
        <g fill="#a8abad" font-weight="700" font-size="16" text-anchor="middle"><text x="49" y="13">N</text><text x="49" y="95">S</text><text x="8" y="54">W</text><text x="90" y="54">E</text></g>
        <text class="face" x="49" y="52">TOP</text></svg>
      <button class="ucs">Unnamed<svg viewBox="0 0 10 6"><path d="M1 1h8L5 5z" fill="none" stroke="#666a7a"/></svg></button>
    </div>
    <div class="nav" role="toolbar" aria-label="Navigation bar">
      <svg viewBox="0 0 32 212" fill="none" stroke="#3d4247">
        <circle cx="26" cy="5" r="3.500"/><path d="M24 3l4 4M28 3l-4 4"/>
        <path d="M16 19h11v11a11 11 0 1 1-11-11z"/><circle cx="16" cy="30" r="8"/><circle cx="16" cy="30" r="5.500"/><path d="M8 38l4-4M24 38l-4-4"/>
        <path d="M3 56.500h26M3 164.500h26" stroke="#6a6f73"/>
        <path d="M13 49h7l-3.500 3zM13 119h7l-3.500 3zM13 157h7l-3.500 3z" fill="#3d4247" stroke="none"/>
        <path d="M11 83C9 79 5 76 5 74s3-2 5 1l-2-9c0-3 3-3 4 0l1 5V63c0-2 3-2 3 0l1 8 2-7c1-2 3-1 3 1l-1 7 3-4c1-2 3-1 3 1-2 4-4 12-7 14z" stroke-width="1.500"/>
        <path d="M5 90l14 14M19 90L5 104M5 95v-5h5M14 90h5v5M5 99v5h5" stroke-width="1.500"/><circle cx="20" cy="105" r="5" stroke-width="1.500"/><path d="M23 108l5 5" stroke-width="3"/>
        <path d="M14 150v-16h-3l5-6 5 6h-3v16z" stroke-width="1.300"/><path d="M13 146C2 146 2 137 14 137M18 137c12 0 12 7 2 8" stroke-width="1.500"/><path d="M7 146l5-4v7z" fill="#3d4247"/>
        <path d="M4.500 169.500h6v6h-6zM12.500 169.500h6v6h-6zM20.500 169.500h6v6h-6zM4.500 178.500h16v13h-16z" stroke-width="1.300"/><path d="M9 181l7 4-7 4z" fill="#3d4247"/>
        <circle cx="26" cy="206" r="3.500"/><path d="M24 206h4"/>
      </svg>
    </div>
    <svg class="axes" viewBox="0 0 90 80"><g fill="none" stroke="#eef0f0"><path d="M14.500 15v50M14 65.500h51M10.500 60.500h9v9h-9z"/><path d="M16 -2l6 7 6-7M22 5v6M69 51l13 13M82 51L69 64" stroke-width="1.200"/></g></svg>
  </div>
  <div class="edge"></div>
</main>

<footer class="status">
  <nav class="layouts">
    <button class="lt on"><svg viewBox="0 0 66 18" preserveAspectRatio="none"><path d="M0 0h66c-7 2-5 18-12 18H13C5 18 6 3 0 0z" fill="url(#gma)"/></svg><span>Model</span></button>
    <button class="lt"><svg viewBox="0 0 66 18" preserveAspectRatio="none"><path d="M0 0h66c-6 2-5 18-12 18H12C4 18 6 3 0 0z" fill="#5a5a5a"/></svg><span>Layout1</span></button>
    <button class="lt"><svg viewBox="0 0 66 18" preserveAspectRatio="none"><path d="M0 0h66c-6 2-5 18-12 18H12C4 18 6 3 0 0z" fill="#5a5a5a"/></svg><span>Layout2</span></button>
    <button class="lplus" aria-label="New layout">+</button>
  </nav>
  <div class="tools">
    <div class="grp"><button class="txt">MODEL</button></div>
    <div class="grp"><button aria-label="Grid"><svg><use href="#i-grid"/></svg></button><button aria-label="Snap"><svg><use href="#i-snap"/></svg></button><button class="sdd" aria-label="Snap list"><i class="ar m"></i></button></div>
    <div class="grp"><button aria-label="Ortho"><svg><use href="#i-ortho"/></svg></button><button aria-label="Polar"><svg><use href="#i-polar"/></svg></button><button class="sdd" aria-label="Polar list"><i class="ar m"></i></button><button aria-label="Isodraft"><svg><use href="#i-iso"/></svg></button><button class="sdd" aria-label="Isodraft list"><i class="ar m"></i></button></div>
    <div class="grp"><button aria-label="Object snap tracking"><svg><use href="#i-otrack"/></svg></button><button aria-label="Object snap"><svg><use href="#i-osnap"/></svg></button><button class="sdd" aria-label="Object snap list"><i class="ar m"></i></button></div>
    <div class="grp"><button class="blue" aria-label="Annotation visibility"><svg><use href="#i-ann1"/></svg></button><button aria-label="Auto scale"><svg><use href="#i-ann2"/></svg></button><button aria-label="Annotation scale"><svg><use href="#i-ann"/></svg></button><button class="scale">1:1<i class="ar m"></i></button></div>
    <div class="grp"><button aria-label="Workspace"><svg><use href="#i-gear"/></svg></button><button class="sdd" aria-label="Workspace list"><i class="ar m"></i></button></div>
    <div class="grp"><button aria-label="Annotation monitor"><svg><use href="#i-plus"/></svg></button></div>
    <div class="grp"><button aria-label="Isolate objects"><svg><use href="#i-shapes"/></svg></button></div>
    <div class="grp"><button aria-label="Graphics performance"><svg><use href="#i-perf"/></svg></button></div>
    <div class="grp"><button aria-label="Clean screen"><svg><use href="#i-full"/></svg></button><button aria-label="Customization"><svg><use href="#i-menu"/></svg></button></div>
  </div>
</footer>

<div class="taskbar">
  <div class="apps">
    <button class="tk sys" aria-label="Start"><svg viewBox="0 0 24 24"><path d="M4 6.500l6-1V11H4zM11 5.300l9-1.300v7h-9zM4 12h6v6l-6-1zM11 12h9v8l-9-1.500z" fill="#fff"/></svg></button>
    <button class="tk sys" aria-label="Search"><svg viewBox="0 0 24 24"><circle cx="14" cy="9.500" r="5.500" fill="none" stroke="#fff" stroke-width="1.400"/><path d="M10 13.500L4 20" stroke="#fff" stroke-width="1.500"/></svg></button>
    <button class="tk sys" aria-label="Task View"><svg viewBox="0 0 24 24"><path d="M4.500 7.500h10v9h-10zM4.500 3v2.500h10V3M4.500 21v-2.500h10V21M18.500 4v16" fill="none" stroke="#fff" stroke-width="1.300"/><path d="M17 8h3v3h-3z" fill="#fff"/></svg></button>
    <button class="tk first" aria-label="Edge"><svg viewBox="0 0 24 24"><path d="M2 11C3 5 7 1.500 12 1.500c7 0 10 5 10 12H9c0 6 7 6 11 3.500v4C13 25 4 22 5 13c0-3 2-5 5-7-4 0-7 3-8 5zM9 10h7c0-5-6-5-7 0z" fill="#0a7bd8"/></svg></button>
    <button class="tk" aria-label="File Explorer"><svg viewBox="0 0 24 24"><path d="M1 4h9l2 2h10v14H1z" fill="#ffe08a"/><path d="M1 4h9l1 2H1z" fill="#f5b83c"/><path d="M5 21v-6q0-2 2-2h9q2 0 2 2v6h-4v-4H9v4z" fill="#35aee2"/></svg></button>
    <button class="tk run" aria-label="Calculator"><svg viewBox="0 0 24 24"><path d="M3 0h18v24H3z" fill="#fff"/><path d="M5 2h14v4H5z"/><path d="M5 9.500h3M10 9.500h3M15 9.500h3M5 14.500h3M10 14.500h3M15 14.500h3M5 19.500h3M10 19.500h3M15 19.500h3" stroke="#000" stroke-width="2.500"/></svg></button>
    <button class="tk run" aria-label="Chrome"><svg viewBox="0 0 24 24"><circle cx="12" cy="12" r="11" fill="#fcc934"/><path d="M12 12L2.500 6.500A11 11 0 0 1 21.500 6.500H12z" fill="#e94335"/><path d="M12 12L2.500 6.500A11 11 0 0 0 11 23l5-9z" fill="#34a353"/><circle cx="12" cy="12" r="5.500" fill="#fff"/><circle cx="12" cy="12" r="4.300" fill="#3b7ee8"/></svg></button>
    <button class="tk" aria-label="Snipping Tool"><svg viewBox="0 0 24 24"><ellipse cx="11" cy="12" rx="11" ry="6" fill="#8d9296" transform="rotate(-20 11 12)"/><ellipse cx="12" cy="8" rx="10.500" ry="5.500" fill="#f6f6f6" stroke="#d03434" transform="rotate(-15 12 8)"/><path d="M9 5l6 10M16 4l-2 12" stroke="#8b9094" stroke-width="1.300"/><circle cx="15" cy="19.500" r="2.500" fill="none" stroke="#2b8fd0" stroke-width="1.800"/><circle cx="20.500" cy="15.500" r="2.300" fill="none" stroke="#2b8fd0" stroke-width="1.800"/></svg></button>
    <button class="tk run" aria-label="Discord"><svg viewBox="0 0 24 24"><path d="M4 2h16q2 0 2 2v18l-4-3H4q-2 0-2-2V4q0-2 2-2z" fill="#7383d0"/><path d="M7 7q5-2 10 0 2 4 2 8l-4 1-1-1h-4l-1 1-4-1q0-4 2-8z" fill="#fff"/><circle cx="9.500" cy="11.500" r="1.400" fill="#7383d0"/><circle cx="14.500" cy="11.500" r="1.400" fill="#7383d0"/><circle cx="18" cy="17" r="7" fill="#ed4f4f"/><circle cx="18" cy="17" r="2.400" fill="#fff"/></svg></button>
    <button class="tk cur" aria-label="AutoCAD"><svg viewBox="0 0 24 24"><path d="M0 0h24v24H0z" fill="#f6e3df"/><use href="#i-acad" x="3" y="2" width="18" height="20"/></svg></button>
  </div>
  <div class="tray">
    <button class="ti" aria-label="People"><svg viewBox="0 0 20 20"><g fill="none" stroke="#fff" stroke-width="1.300"><circle cx="7" cy="9" r="2.700"/><path d="M3 17q0-5 4-5t4 5"/><circle cx="13" cy="5" r="2.700"/><path d="M11 9q6-2 6 5"/></g></svg></button>
    <button class="ti chev" aria-label="Hidden icons"><svg viewBox="0 0 20 20"><path d="M4 13l6-6 6 6" fill="none" stroke="#fff" stroke-width="1.400"/></svg></button>
    <button class="ti" aria-label="Battery"><svg viewBox="0 0 20 20"><path d="M6 6.500h11v7H6z" fill="none" stroke="#fff"/><path d="M8 8h7v4H8z" fill="#fff"/><path d="M18 8v4M3 4v3M6 4v3M2 7h5v2l-2 2v4" stroke="#fff" fill="none"/></svg></button>
    <button class="ti" aria-label="Volume"><svg viewBox="0 0 20 20"><path d="M2 8h3l4-4v12l-4-4H2z" fill="none" stroke="#fff"/><path d="M11 8q2 2 0 4" stroke="#fff" fill="none"/><path d="M13 6q3 4 0 8M15.500 4q4 6 0 12" stroke="#888" fill="none"/></svg></button>
    <button class="ti" aria-label="Network"><svg viewBox="0 0 20 20"><path d="M4 16Q4 6 15 5M7 16q0-7 8-8M10 16q0-5 5-5" stroke="#bbb" fill="none" stroke-width="1.300"/><circle cx="14" cy="15" r="1.500" fill="#fff"/></svg></button>
    <span class="lang">ENG</span>
    <time class="clock" datetime="2020-05-13T21:23">9:23 PM<br>13/05/2020</time>
    <button class="note" aria-label="3 notifications"><svg viewBox="0 0 20 20"><path d="M2 3h16v12h-9l-3 3v-3H2z" fill="#fff"/><path d="M5 6.500h10M5 9.500h10M5 12.500h6" stroke="#000"/></svg><b>3</b></button>
  </div>
</div>
</body>
</html>
```

FILE: styles.css
```css
* { box-sizing: border-box; }
html, body { height: 100%; }
body {
  margin: 0; display: flex; flex-direction: column; overflow: hidden;
  font: 12px/16px "Open Sans", "Noto Sans", sans-serif;
  background: #222830; color: #f0f0f0;
}
button {
  margin: 0; padding: 0; border: 0; background: none; font: inherit; color: inherit;
  display: flex; align-items: center; justify-content: center;
}
h1, h2, p { margin: 0; font: inherit; }
a { color: inherit; text-decoration: none; }
svg { display: block; flex: none; }
.sprite { position: absolute; width: 0; height: 0; }
.n { fill: #50586a; stroke: #5b9bff; stroke-width: 1; }
.w { fill: none; stroke: #eee; stroke-width: 1.300; }

/* arrows */
.ar { width: 0; height: 0; flex: none; border-style: solid; border-color: #f0f0f0 transparent transparent; }
.ar.s { border-width: 3px 3px 0; }
.ar.m { border-width: 4px 4px 0; }
.ar.dark { border-width: 4px 4px 0; border-top-color: #35383e; }
.ar.dim { border-top-color: #a4a4a4; }

/* title bar */
.top { display: grid; grid-template-columns: 41px 1fr; grid-template-rows: 24px 21px; background: #535353; flex: none; }
.app {
  grid-row: 1 / 3; align-self: start; height: 41px; border: 1px solid #000;
  background: linear-gradient(#c0c0c0, #6c6c6c); justify-content: flex-start; padding-left: 3px; gap: 1px;
}
.appicon { width: 26px; height: 29px; margin-bottom: 6px; }
.titlebar { display: flex; background: #fff; }
.qat, .info { display: flex; align-items: stretch; background: linear-gradient(#9a9a9a, #505050); }
.qat { padding-left: 5px; }
.q { width: 24px; }
.q svg, .sign svg { width: 20px; height: 20px; }
.drop { width: 12px; }
.conn { width: 17px; justify-content: flex-start; }
.custom { width: 17px; }
.custom .ar { position: relative; }
.custom .ar::before { content: ""; position: absolute; left: -4px; top: -7px; width: 8px; height: 1px; background: #f0f0f0; }
.title { flex: 1; display: flex; justify-content: center; gap: 12px; align-items: center; color: #111; white-space: nowrap; }
.expand { width: 14px; }
.expand i { border: solid transparent; border-left-color: #fff; border-width: 4px 0 4px 4px; }
.search {
  width: 180px; border: 1px solid #2d2d2d; background: #707070; color: #eee; font: italic 12px "Open Sans", sans-serif;
  padding: 0 3px; margin: 1px 0; outline: 0;
}
.search::placeholder { color: #c8c8c8; opacity: 1; }
.sign { width: 122px; justify-content: flex-start; gap: 3px; padding-left: 2px; }
.sign .ar { margin-left: auto; margin-right: 6px; }
.help { width: 30px; border-left: 1px solid #777; padding-left: 2px; }
.help b { width: 16px; height: 16px; line-height: 15px; border-radius: 50%; background: #f4f6fa; border: 1px solid #223; color: #1f4fa8; font-size: 13px; }
.winctl { display: flex; padding: 0 3px 0 25px; }
.winctl button { width: 45px; }
.winctl svg { width: 12px; height: 12px; }

/* ribbon tabs */
.tabs { display: flex; padding-left: 5px; border-top: 1px solid #262626; border-bottom: 1px solid #333; white-space: nowrap; }
.tabs a { padding: 2px 9px 0; color: #c9c9c9; }
.tabs a.on { color: #f4f4f4; background: linear-gradient(#707070, #5c5c5c); border: 1px solid #2f2f2f; border-bottom: 0; margin: 2px 1px 0 0; padding: 0 8px; height: 18px; }
.minrib { gap: 7px; margin-left: 13px; }
.pill { width: 13px; height: 8px; border-radius: 2px; background: #ececec; position: relative; }
.pill::after { content: ""; position: absolute; left: 4px; top: 3px; border: solid transparent; border-bottom-color: #333; border-width: 0 3px 3px; }

/* ribbon */
.ribbon { display: flex; flex: none; padding-left: 1px; background: linear-gradient(#4c4c4c, #343434); border-bottom: 1px solid #8a8a8a; }
.panel { display: flex; flex-direction: column; border-left: 1px solid #6a6a6a; border-right: 1px solid #3a3a3a; background: #5b5b5b; border-bottom: 1px solid #333; white-space: nowrap; }
.panel h2 { display: flex; height: 18px; align-items: center; justify-content: center; gap: 7px; background: linear-gradient(#474747, #545454); margin: 0 1px; }
.panel h2.launcher { padding: 0 3px; }
.panel h2.tight { padding: 0 2px; gap: 4px; }
.launcher span { margin: 0 auto; }
.launch { width: 8px; height: 8px; }
.body { height: 79px; padding-top: 4px; display: grid; grid-template-rows: 24px 24px 24px; justify-items: center; align-items: center; }
.modeling { grid-template-columns: 46px 58px 27px; }
.modeling .ib { grid-column: 3; }
.mesh { grid-template-columns: 52px 23px; }
.solid { grid-template-columns: 30px 26px 26px 11px; }
.draw { grid-template-columns: 30px 22px 30px 11px; }
.modify { grid-template-columns: 28px 28px 22px 30px 22px 13px; }
.section { grid-template-columns: 74px; }
.coords { grid-template-columns: 28px 8px 32px 24px 24px 26px; }
.view { grid-template-columns: 122px; padding-left: 1px; padding-right: 1px; }
.selection { grid-template-columns: 44px 66px 59px; padding-left: 2px; }
.big { grid-row: 1 / 4; height: 72px; width: 100%; flex-direction: column; justify-content: flex-start; padding-top: 1px; line-height: 15px; position: relative; }
.big svg { width: 34px; height: 34px; margin-bottom: 3px; }
.big .ar { margin-top: 3px; }
.big.on { background: linear-gradient(#8fb0e2, #4d6794); border: 1px solid #2c4270; padding-top: 0; }
.gizmo .ar { position: absolute; right: 4px; bottom: 16px; }
.ib, .ib svg { width: 20px; height: 20px; }
.dd { width: 10px; height: 20px; }
.sel { position: relative; width: 100%; height: 22px; }
.sel.wide { grid-column: 3 / 7; }
.sel select {
  appearance: none; width: 100%; height: 22px; padding: 0 18px 0 20px; border: 1px solid #2e2e2e; border-radius: 0;
  background: linear-gradient(#6b6b6b, #505050); color: #f0f0f0; font: inherit;
}
.sel svg { position: absolute; left: 2px; top: 2px; width: 18px; height: 18px; }
.sel .ar { position: absolute; right: 3px; top: 9px; }
.vport { justify-self: start; padding-left: 2px; gap: 4px; }
.vport svg { width: 20px; height: 20px; }
.folded {
  width: 60px; margin-right: 1px; border: 1px solid #2f2f2f; background: linear-gradient(#757575, #4d4d4d);
  flex-direction: column; justify-content: flex-start; padding: 3px 0 5px;
}
.folded svg { width: 34px; height: 34px; margin-bottom: 2px; }
.folded svg.sm { width: 20px; height: 20px; margin-bottom: 0; }
.folded .ar { margin-top: auto; }

/* drawing tabs */
.files { display: flex; flex: none; height: 29px; padding: 3px 0 0 17px; background: #383838; border-bottom: 4px solid #5a5a5a; }
.ftab { position: relative; width: 128px; height: 22px; justify-content: flex-start; padding: 2px 0 0 14px; color: #a8a8a8; }
.ftab svg { position: absolute; inset: 0; width: 100%; height: 100%; }
.ftab span, .ftab b { position: relative; }
.ftab.on { color: #f2f2f2; padding: 2px 16px 0 10px; justify-content: space-between; }
.ftab b { font: 11px "DejaVu Sans", sans-serif; color: #333; }
.fplus { width: 23px; height: 16px; margin: 4px 0 0 2px; background: linear-gradient(#585858, #4a4a4a); border-radius: 3px 8px 3px 8px; font: 700 16px/16px "Open Sans", sans-serif; color: #bbb; }

/* drawing area */
.canvas { flex: 1; display: flex; min-height: 0; background: #212830; }
.work { flex: 1; position: relative; overflow: hidden; }
.drawing { position: absolute; width: 100%; height: 100%; }
.edge { width: 8px; background: linear-gradient(#a8c4e8, #dce8f8 90px, #b4c8e6 91px); border-right: 2px solid #18c4ee; }
.vplabel { position: absolute; left: 3px; top: 6px; font-size: 11px; }
.vpctl { position: absolute; right: 10px; top: 9px; display: flex; gap: 8px; }
.vpctl svg { width: 12px; height: 12px; }
.cube { position: absolute; right: 13px; top: 37px; width: 98px; display: flex; flex-direction: column; align-items: center; font-family: "Liberation Sans", Arial, sans-serif; }
.cube > svg { width: 98px; height: 98px; overflow: visible; }
.face { font: 700 10px "Open Sans", sans-serif; fill: #434b54; text-anchor: middle; }
.ucs { margin-top: 15px; width: 68px; height: 17px; gap: 5px; border-radius: 4px; background: #8b8e9c; border: 1px solid #9da0ac; color: #454955; font: 10px "Open Sans", sans-serif; }
.ucs svg { width: 10px; height: 6px; }
.nav { position: absolute; right: 3px; top: 192px; width: 34px; border: 1px solid #73787b; border-radius: 4px; background: #585d61; box-shadow: 0 0 3px #14181d; }
.nav svg { width: 32px; height: 212px; }
.axes { position: absolute; left: 0; bottom: 0; width: 90px; height: 80px; overflow: visible; }

/* status bar */
.status { flex: none; height: 29px; display: flex; justify-content: space-between; background: #383838; border-top: 1px solid #4a4a4a; }
.layouts { display: flex; padding-left: 8px; }
.lt { position: relative; width: 66px; height: 17px; margin-right: -3px; color: #b4b4b4; }
.lt svg { position: absolute; inset: 0; width: 100%; height: 100%; }
.lt span { position: relative; }
.lt.on { color: #fff; font-weight: 700; z-index: 1; }
.lplus { width: 23px; height: 16px; margin-left: 6px; background: #505050; border-radius: 3px 3px 10px 6px; font: 700 16px/16px "Open Sans", sans-serif; color: #bbb; }
.tools { display: flex; padding: 0 1px 2px 0; }
.grp { display: flex; border: 1px solid #7a7a7a; background: #505050; margin-left: 1px; }
.grp button { width: 24px; color: #c4c4c4; }
.grp svg { width: 20px; height: 20px; }
.grp .sdd { width: 14px; }
.grp .txt { width: 47px; color: #fff; }
.grp .blue { color: #2a8cff; }
.grp .scale { width: 33px; gap: 3px; color: #fff; }

/* taskbar */
.taskbar { flex: none; height: 40px; display: flex; justify-content: space-between; background: #000207; }
.apps { display: flex; gap: 1px; }
.tk { width: 48px; border-bottom: 2px solid transparent; padding-top: 2px; }
.tk.sys { margin-right: -1px; }
.tk.first { margin-left: 3px; }
.tk svg { width: 24px; height: 24px; }
.tk.run { background: linear-gradient(#76b9ed, #76b9ed) 4px 100% / 40px 2px no-repeat border-box; }
.tk.cur { background: #333438; border-bottom-color: #76b9ed; }
.tray { display: flex; align-items: center; padding-right: 4px; }
.ti { width: 24px; }
.ti svg { width: 20px; height: 20px; }
.chev { margin-left: 12px; }
.lang { padding: 0 10px 0 5px; }
.clock { text-align: center; line-height: 18px; }
.note { position: relative; width: 52px; height: 40px; border-right: 1px solid #444; }
.note svg { width: 20px; height: 20px; }
.note b { position: absolute; right: 12px; bottom: 4px; width: 17px; height: 17px; border-radius: 50%; background: #333; border: 1px solid #777; font-size: 11px; line-height: 15px; }
```
